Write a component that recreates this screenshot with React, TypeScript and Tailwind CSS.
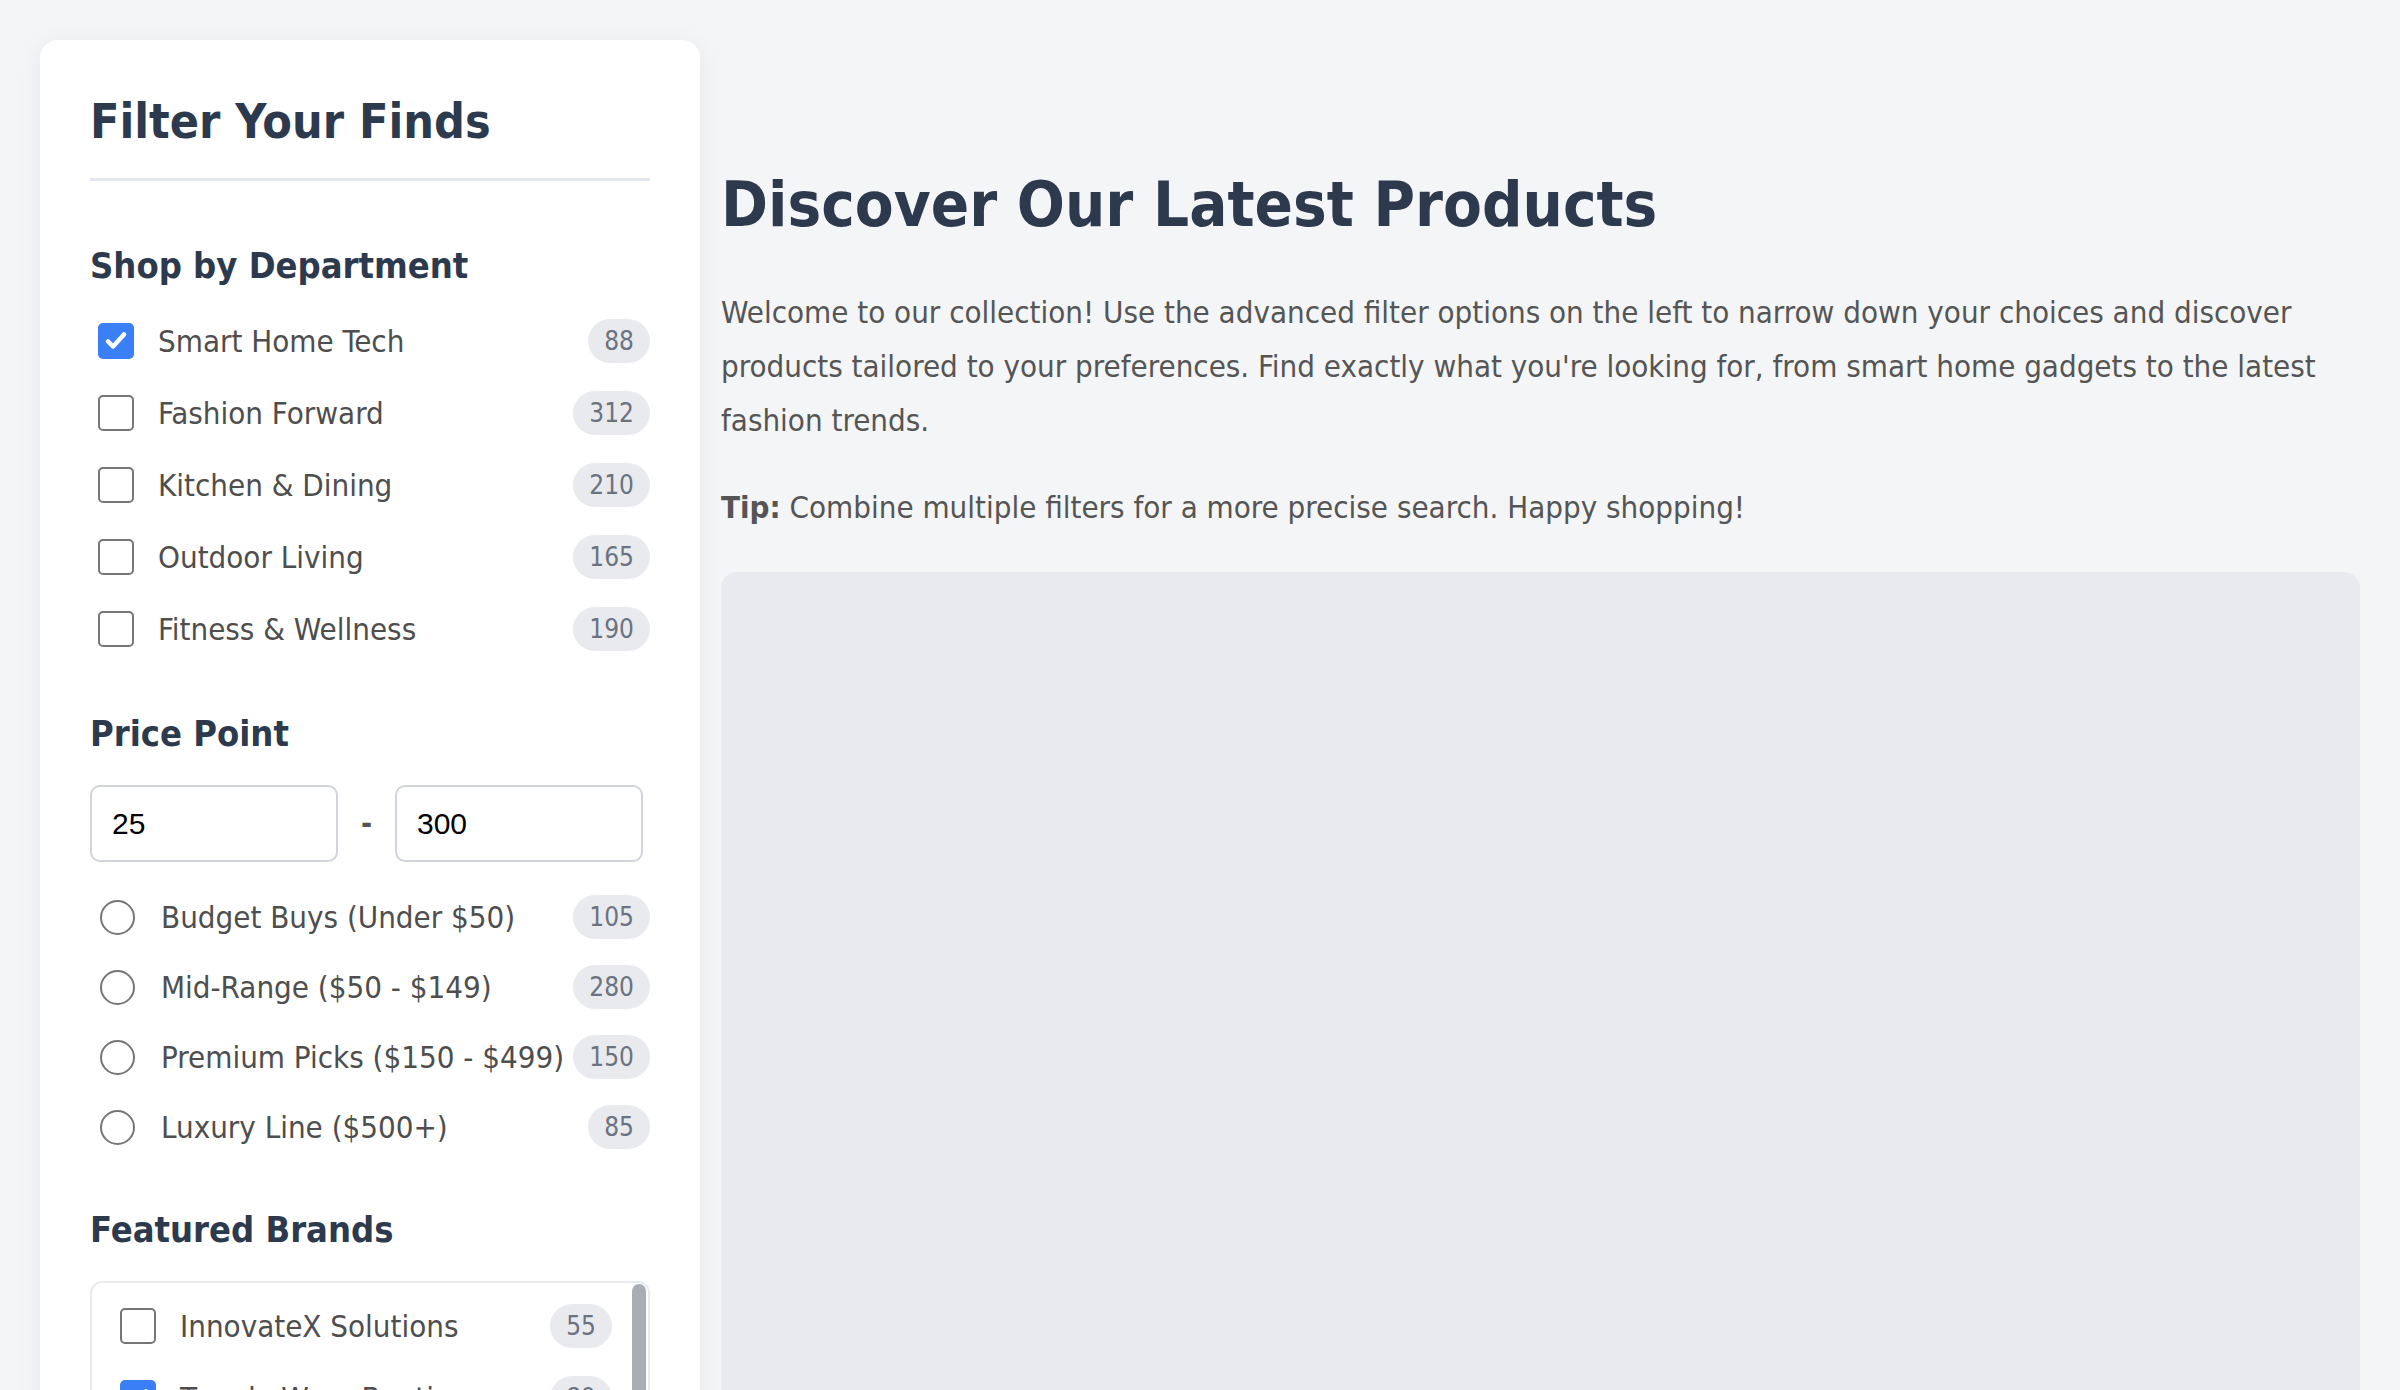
import React from "react";

function Badge({ n }: { n: string }) {
  return (
    <span className="flex h-[44px] items-center rounded-full bg-[#e9eaee] px-[16px] text-[26px] leading-none text-[#6b7280]">
      {n}
    </span>
  );
}

function Check({ checked }: { checked?: boolean }) {
  return checked ? (
    <span className="ml-[8px] mr-[24px] flex h-[36px] w-[36px] shrink-0 items-center justify-center rounded-[5px] bg-[#3b7ff6]">
      <svg width="24" height="24" viewBox="0 0 24 24" fill="none">
        <path d="M4 12.5l5 5L20 5.5" stroke="white" strokeWidth="4.5" strokeLinecap="round" strokeLinejoin="round" />
      </svg>
    </span>
  ) : (
    <span className="ml-[8px] mr-[24px] h-[36px] w-[36px] shrink-0 rounded-[5px] border-[2px] border-[#767676] bg-white" />
  );
}

function Radio() {
  return <span className="ml-[10px] mr-[26px] h-[35px] w-[35px] shrink-0 rounded-full border-[2px] border-[#767676] bg-white" />;
}

function CheckRow({ label, n, checked }: { label: string; n: string; checked?: boolean }) {
  return (
    <div className="flex h-[44px] items-center">
      <Check checked={checked} />
      <span className="flex-1 whitespace-nowrap text-[31px] leading-none text-[#4e4e4e]">{label}</span>
      <Badge n={n} />
    </div>
  );
}

function RadioRow({ label, n }: { label: string; n: string }) {
  return (
    <div className="flex h-[44px] items-center">
      <Radio />
      <span className="flex-1 whitespace-nowrap text-[31px] leading-none text-[#4e4e4e]">{label}</span>
      <Badge n={n} />
    </div>
  );
}

function SectionTitle({ children, className }: { children: React.ReactNode; className?: string }) {
  return <h3 className={"text-[36px] font-bold leading-[42px] text-[#2d3a4e] " + (className ?? "")}>{children}</h3>;
}

export default function App() {
  return (
    <div className="min-h-[1390px] bg-[#f4f5f7] font-['DejaVu_Sans_Condensed','DejaVu_Sans',sans-serif]">
      <div className="flex items-start gap-[21px] p-[40px]">
        <aside className="w-[660px] shrink-0 rounded-[18px] bg-white px-[50px] pt-[50px] pb-[50px] shadow-[0_4px_24px_rgba(0,0,0,0.06)]">
          <h2 className="border-b-[3px] border-[#e2e6ee] pb-[25px] text-[48px] font-bold leading-[63px] text-[#2d3a4e]">
            Filter Your Finds
          </h2>

          <SectionTitle className="mt-[64px]">Shop by Department</SectionTitle>
          <div className="mt-[32px] flex flex-col gap-[28px]">
            <CheckRow label="Smart Home Tech" n="88" checked />
            <CheckRow label="Fashion Forward" n="312" />
            <CheckRow label="Kitchen & Dining" n="210" />
            <CheckRow label="Outdoor Living" n="165" />
            <CheckRow label="Fitness & Wellness" n="190" />
          </div>

          <SectionTitle className="mt-[62px]">Price Point</SectionTitle>
          <div className="mt-[30px] flex items-center">
            <div className="flex h-[77px] w-[248px] items-center rounded-[10px] border-[2px] border-[#d1d5db] pl-[20px] font-['Liberation_Sans',Arial,sans-serif] text-[30px] text-black">
              25
            </div>
            <span className="flex-1 text-center text-[30px] font-bold text-[#555]">-</span>
            <div className="flex h-[77px] w-[248px] items-center rounded-[10px] border-[2px] border-[#d1d5db] pl-[20px] font-['Liberation_Sans',Arial,sans-serif] text-[30px] text-black">
              300
            </div>
            <span className="w-[7px]" />
          </div>
          <div className="mt-[33px] flex flex-col gap-[26px]">
            <RadioRow label="Budget Buys (Under $50)" n="105" />
            <RadioRow label="Mid-Range ($50 - $149)" n="280" />
            <RadioRow label="Premium Picks ($150 - $499)" n="150" />
            <RadioRow label="Luxury Line ($500+)" n="85" />
          </div>

          <SectionTitle className="mt-[60px]">Featured Brands</SectionTitle>
          <div className="mt-[30px] flex h-[300px] overflow-hidden rounded-[12px] border-[2px] border-[#e8eaee]">
            <div className="flex flex-1 flex-col gap-[28px] pl-[20px] pr-[20px] pt-[21px]">
              <CheckRow label="InnovateX Solutions" n="55" />
              <CheckRow label="Trendy Wear Boutique" n="89" checked />
              <CheckRow label="HomeEssentials Co." n="120" />
              <CheckRow label="ActiveLife Gear" n="75" />
            </div>
            <div className="w-[16px] shrink-0 pt-[1px]">
              <div className="h-[180px] w-[14px] rounded-full bg-[#a9aeb5]" />
            </div>
          </div>
        </aside>

        <main className="flex-1 pt-[127px]">
          <h1 className="text-[63px] font-bold leading-[76px] text-[#2d3a4e]">Discover Our Latest Products</h1>
          <p className="mt-[42px] text-[31px] leading-[54px] text-[#555]">
            Welcome to our collection! Use the advanced filter options on the left to narrow down your choices and discover
            products tailored to your preferences. Find exactly what you're looking for, from smart home gadgets to the latest
            fashion trends.
          </p>
          <p className="mt-[33px] text-[31px] leading-[54px] text-[#555]">
            <strong className="font-bold">Tip:</strong> Combine multiple filters for a more precise search. Happy shopping!
          </p>
          <div className="mt-[38px] h-[900px] rounded-[16px] bg-[#e9eaef]" />
        </main>
      </div>
    </div>
  );
}
